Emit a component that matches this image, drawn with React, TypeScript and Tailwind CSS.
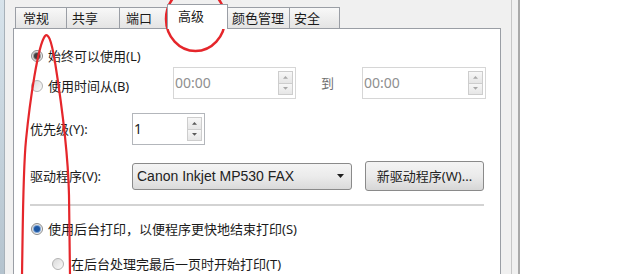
import React from "react";

const font = "font-['Noto_Sans','Noto_Sans_CJK_SC',sans-serif]";

function Radio({ dot, light }: { dot?: string; light?: boolean }) {
  return (
    <span
      className={`w-[12px] h-[12px] shrink-0 rounded-full border bg-gradient-to-br from-[#d9d9d9] to-[#fbfbfb] flex items-center justify-center ${
        light ? "border-[#b3b3b3]" : "border-[#8b8b8b]"
      }`}
    >
      {dot === "gray" && <span className="w-[6px] h-[6px] rounded-full bg-[#3f3f3f] ring-1 ring-[#9a9a9a]" />}
      {dot === "blue" && <span className="w-[6px] h-[6px] rounded-full bg-[#1d57a3] ring-1 ring-[#7fa6d6]" />}
    </span>
  );
}

function Arrow({ up, color = "#6b6b6b", size = 7 }: { up?: boolean; color?: string; size?: number }) {
  return (
    <svg width={size} height={size / 1.75} viewBox="0 0 7 4">
      <path d={up ? "M0 4 L3.5 0 L7 4 Z" : "M0 0 L7 0 L3.5 4 Z"} fill={color} />
    </svg>
  );
}

function Spinner({ value, w, disabled }: { value: string; w: string; disabled?: boolean }) {
  const c = disabled ? "#a8a8a8" : "#5a5a5a";
  return (
    <div
      className={`${w} h-full flex items-center justify-between border bg-white pl-[1px] pr-[2px] py-[3px] ${
        disabled ? "border-[#d6d6d6] text-[#8f8f8f]" : "border-[#b3b6bb] text-[#1e1e1e]"
      }`}
    >
      <span className="text-[14px] leading-none">{value}</span>
      <div className="w-[15px] h-full flex flex-col">
        <div className="flex-1 flex items-center justify-center border border-[#cdcdcd] bg-gradient-to-b from-[#f7f7f7] to-[#e6e6e6]">
          <Arrow up color={c} size={5} />
        </div>
        <div className="flex-1 flex items-center justify-center border border-t-0 border-[#cdcdcd] bg-gradient-to-b from-[#f7f7f7] to-[#e6e6e6]">
          <Arrow color={c} size={5} />
        </div>
      </div>
    </div>
  );
}

function Tab({ label, w, pl, selected }: { label: string; w: string; pl: string; selected?: boolean }) {
  if (selected) {
    return (
      <div
        className={`${w} ${pl} h-[25px] -mb-px -ml-px relative z-10 flex items-center pb-[1px] bg-white border border-b-0 border-[#9a9ea5] text-[13px] leading-none`}
      >
        {label}
      </div>
    );
  }
  return (
    <div
      className={`${w} ${pl} h-[21px] -ml-px first:ml-0 flex items-center pt-[1px] bg-gradient-to-b from-[#f8f8f8] to-[#e4e4e4] border border-b-0 border-[#9a9ea5] text-[13px] leading-none`}
    >
      {label}
    </div>
  );
}

export default function App() {
  return (
    <div className={`relative w-[620px] h-[274px] overflow-hidden flex bg-white text-[#1a1a1a] ${font}`}>
      <div className="w-[5px] bg-gradient-to-b from-[#d7e3eb] to-[#b4c3ce] border-r border-[#a7b1b9]" />
      <div className="w-[8px] bg-[#f0f0f0]" />
      <div className="w-[488px] flex flex-col bg-[#f0f0f0]">
        <div className="h-[30px] flex items-end pl-[2px]">
          <Tab label="常规" w="w-[52px]" pl="pl-[7px]" />
          <Tab label="共享" w="w-[54px]" pl="pl-[5px]" />
          <Tab label="端口" w="w-[49px]" pl="pl-[6px]" />
          <Tab label="高级" w="w-[61px]" pl="pl-[10px]" selected />
          <Tab label="颜色管理" w="w-[63px]" pl="pl-[4px]" />
          <Tab label="安全" w="w-[51px]" pl="pl-[4px]" />
        </div>
        <div className="flex-1 bg-white border border-b-0 border-[#9a9ea5] pl-[16px] pt-[17px] text-[13px]">
          <div className="h-[20px] flex items-center gap-[5px] pl-px">
            <Radio dot="gray" />
            <span className="leading-none">始终可以使用(L)</span>
          </div>

          <div className="mt-px h-[32px] flex items-center">
            <div className="w-[143px] flex items-center gap-[5px] pl-px pt-[6px]">
              <Radio light />
              <span className="leading-none">使用时间从(B)</span>
            </div>
            <Spinner value="00:00" w="w-[123px]" disabled />
            <span className="ml-[25px] w-[13px] leading-none text-[#6f6f6f]">到</span>
            <div className="ml-[28px] h-full">
              <Spinner value="00:00" w="w-[124px]" disabled />
            </div>
          </div>

          <div className="mt-[14px] h-[32px] flex items-center">
            <span className="w-[102px] leading-none">优先级(Y):</span>
            <Spinner value="1" w="w-[73px]" />
          </div>

          <div className="mt-[16px] h-[30px] flex items-center">
            <span className="w-[102px] leading-none">驱动程序(V):</span>
            <div className="w-[220px] h-[27px] flex items-center justify-between rounded-[3px] border border-[#8a8a8a] bg-gradient-to-b from-[#f4f4f4] via-[#ebebeb] to-[#dadada] pl-[4px] pr-[7px]">
              <span className="font-['Liberation_Sans',sans-serif] text-[14px] leading-none text-[#222]">
                Canon Inkjet MP530 FAX
              </span>
              <Arrow color="#1e1e1e" />
            </div>
            <div className="ml-[13px] w-[119px] h-[30px] flex items-center justify-center rounded-[3px] border border-[#8a8a8a] bg-gradient-to-b from-[#f4f4f4] via-[#ebebeb] to-[#d6d6d6]">
              <span className="leading-none text-[#222]">新驱动程序(W)...</span>
            </div>
          </div>

          <div className="mt-[13px] w-[454px] h-[2px] bg-[#d3d3d3]" />

          <div className="mt-[13px] h-[20px] flex items-center gap-[5px] pl-px">
            <Radio dot="blue" />
            <span className="leading-none">使用后台打印，以便程序更快地结束打印(S)</span>
          </div>

          <div className="mt-[15px] h-[20px] flex items-center gap-[7px] pl-[22px]">
            <Radio light />
            <span className="leading-none">在后台处理完最后一页时开始打印(T)</span>
          </div>
        </div>
      </div>
      <div className="w-[11px] bg-[#f0f0f0] border-r border-[#c6c6c6]" />
      <div className="w-[8px] bg-[#f0f0f0] border-r-2 border-[#a9a9a9]" />
      <div className="flex-1 bg-white" />

      <svg className="absolute inset-0 pointer-events-none" width="620" height="274" viewBox="0 0 620 274">
        <ellipse cx="195.5" cy="19" rx="29.5" ry="32" fill="none" stroke="#e5262b" strokeWidth="2.5" />
        <path
          d="M22 276 C23 215 23 170 26 140 C30 100 38 45 45 36 C48 33 51 38 55 62 C61 100 68 150 69 195 L70 276"
          fill="none"
          stroke="#e5262b"
          strokeWidth="2.2"
        />
      </svg>
    </div>
  );
}
